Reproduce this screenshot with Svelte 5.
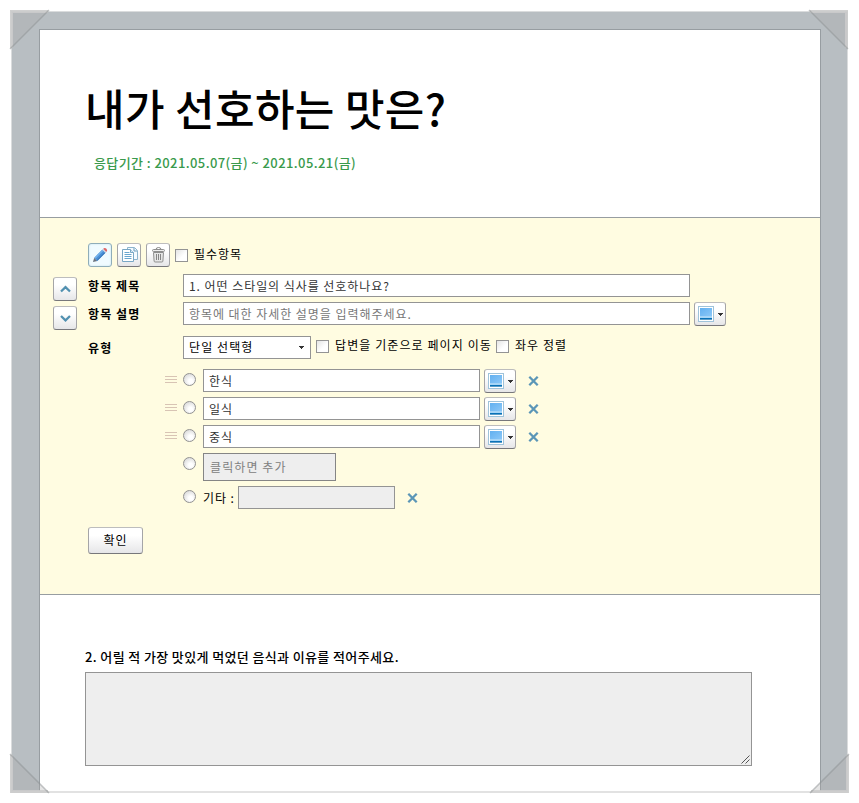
<script>
	let required = $state(false);
	let jumpByAnswer = $state(false);
	let alignSides = $state(false);
	let title = $state('1. 어떤 스타일의 식사를 선호하나요?');
	let description = $state('');
	let type = $state('single');
	let options = $state([
		{ id: 1, text: '한식' },
		{ id: 2, text: '일식' },
		{ id: 3, text: '중식' }
	]);

	const corners = ['top-left', 'top-right', 'bottom-left', 'bottom-right'];

	function addOption() {
		const id = Math.max(0, ...options.map((o) => o.id)) + 1;
		options.push({ id, text: '' });
	}

	function removeOption(id) {
		options = options.filter((o) => o.id !== id);
	}
</script>

{#snippet imageButton()}
	<button class="btn image-btn" aria-label="이미지">
		<svg width="30" height="22" viewBox="0 0 30 22">
			<defs>
				<linearGradient id="sky" x1="0" y1="0" x2="1" y2="1">
					<stop offset="0" stop-color="#62b0f0" />
					<stop offset="1" stop-color="#8cc8f8" />
				</linearGradient>
			</defs>
			<rect x="3.5" y="3.5" width="15" height="15" fill="#fff" stroke="#9fc3da" />
			<rect x="5" y="5" width="12" height="9" fill="url(#sky)" />
			<rect x="5" y="13" width="12" height="2" fill="#a6d5f7" />
			<rect x="5" y="15" width="12" height="1" fill="#0872b8" />
			<rect x="5" y="16" width="12" height="1" fill="#5d9dc8" />
			<path d="M23 10h5v1h-1v1h-1v1h-1v-1h-1v-1h-1z" fill="#333" />
		</svg>
	</button>
{/snippet}

{#snippet removeIcon()}
	<svg width="11" height="10" viewBox="0 0 11 10">
		<path d="M1.3 .8 9.7 9.2M9.7 .8 1.3 9.2" stroke="#5b96b7" stroke-width="2.300" fill="none" />
	</svg>
{/snippet}

<div class="page">
	<div class="frame">
		<div class="paper">
			<header>
				<h1>내가 선호하는 맛은?</h1>
				<p class="period">응답기간 : 2021.05.07(금) ~ 2021.05.21(금)</p>
			</header>

			<section class="editor">
				<div class="order">
					<button class="btn square" aria-label="위로">
						<svg width="22" height="22" viewBox="0 0 22 22">
							<path d="M7 13.5 11.5 9.2 16 13.5" stroke="#5190b0" stroke-width="2.3" fill="none" />
						</svg>
					</button>
					<button class="btn square" aria-label="아래로">
						<svg width="22" height="22" viewBox="0 0 22 22">
							<path d="M7 9 11.5 13.3 16 9" stroke="#5190b0" stroke-width="2.3" fill="none" />
						</svg>
					</button>
				</div>

				<div class="form">
					<div class="row tools">
						<button class="btn square active" aria-label="편집">
							<svg width="22" height="22" viewBox="0 0 22 22">
								<path d="M4 18 5.2 13.7 8.4 16.9z" fill="#6b7480" />
								<path d="M5.2 13.7 13.4 5.5 16.6 8.7 8.4 16.9z" fill="#4a90d6" />
								<path d="M6.3 14 14 6.3" stroke="#75b4ee" stroke-width="1.2" />
								<path d="M8 16.5 16.2 8.3" stroke="#2f6cb0" />
								<path d="M13.2 5.7 14.2 4.7 17.4 7.9 16.4 8.9z" fill="#c9d3df" />
								<path d="M14.2 4.7Q15.8 3.2 17.4 4.7T17.4 7.9z" fill="#e06363" />
							</svg>
						</button>
						<button class="btn square" aria-label="복사">
							<svg width="22" height="22" viewBox="0 0 22 22">
								<path d="M9.5 3.5h7l3 3v9h-10z" fill="#f4faff" stroke="#8db4cd" />
								<path d="M16 4v3h3" fill="none" stroke="#6c9dbd" />
								<path d="M4.5 5.5h8l3 3v9h-11z" fill="#fff" stroke="#79a7c5" />
								<path d="M12.5 5.5v3h3" fill="#d6eaf7" stroke="#79a7c5" />
								<path d="M6.5 8.5h5M6.5 10.5h7M6.5 12.5h7M6.5 14.5h7" stroke="#69a6cf" />
							</svg>
						</button>
						<button class="btn square" aria-label="삭제">
							<svg width="22" height="22" viewBox="0 0 22 22">
								<path d="M9 5.5Q9 3.5 11.5 3.5T14 5.5" fill="none" stroke="#888" />
								<rect x="5.5" y="5.5" width="12" height="2" rx="1" fill="#eee" stroke="#8f8f8f" />
								<path d="M6.5 8.5h10l-.6 8.5q0 1-1 1h-6.8q-1 0-1-1z" fill="#e6e6e6" stroke="#8f8f8f" />
								<path d="M9.5 10v6M11.5 10v6M13.5 10v6" stroke="#858585" />
							</svg>
						</button>
						<label class="check">
							<input type="checkbox" bind:checked={required} />
							<span>필수항목</span>
						</label>
					</div>

					<div class="row title-row">
						<label class="name" for="title">항목 제목</label>
						<input id="title" class="text wide" type="text" bind:value={title} />
					</div>

					<div class="row desc-row">
						<label class="name" for="desc">항목 설명</label>
						<input
							id="desc"
							class="text wide"
							type="text"
							placeholder="항목에 대한 자세한 설명을 입력해주세요."
							bind:value={description}
						/>
						{@render imageButton()}
					</div>

					<div class="row type-row">
						<label class="name" for="type">유형</label>
						<div class="select">
							<select id="type" bind:value={type}>
								<option value="single">단일 선택형</option>
								<option value="multi">복수 선택형</option>
								<option value="text">텍스트형</option>
							</select>
							<svg width="5" height="3" viewBox="0 0 5 3">
								<path d="M0 0h5v1h-1v1h-1v1h-1v-1h-1v-1h-1z" fill="#333" />
							</svg>
						</div>
						<label class="check">
							<input type="checkbox" bind:checked={jumpByAnswer} />
							<span>답변을 기준으로 페이지 이동</span>
						</label>
						<label class="check">
							<input type="checkbox" bind:checked={alignSides} />
							<span>좌우 정렬</span>
						</label>
					</div>

					<ul class="options">
						{#each options as option (option.id)}
							<li>
								<span class="grip"><i></i><i></i><i></i></span>
								<span class="radio"></span>
								<input class="text" type="text" bind:value={option.text} />
								{@render imageButton()}
								<button class="remove" aria-label="삭제" onclick={() => removeOption(option.id)}>
									{@render removeIcon()}
								</button>
							</li>
						{/each}
						<li class="add">
							<span class="grip"></span>
							<span class="radio"></span>
							<button class="add-box" onclick={addOption}>클릭하면 추가</button>
						</li>
						<li class="etc">
							<span class="grip"></span>
							<span class="radio"></span>
							<span class="etc-label">기타 :</span>
							<input class="text" type="text" disabled />
							<button class="remove" aria-label="삭제">
								{@render removeIcon()}
							</button>
						</li>
					</ul>

					<button class="btn confirm">확인</button>
				</div>
			</section>

			<section class="question">
				<h2>2. 어릴 적 가장 맛있게 먹었던 음식과 이유를 적어주세요.</h2>
				<div class="answer">
					<svg width="9" height="9" viewBox="0 0 9 9">
						<path d="M.5 8.5 8.5 .5M4.5 8.5 8.5 4.5" stroke="#555" fill="none" />
					</svg>
				</div>
			</section>
		</div>
	</div>

	{#each corners as corner}
		<svg class="corner {corner}" width="42" height="42" viewBox="0 0 42 42">
			<path d="M1 1H40L1 40z" fill="#aaa" fill-opacity=".3" />
			<path d="M2.500 39V2.500H39" stroke="#ccc" stroke-width="3" stroke-opacity=".85" fill="none" />
			<path d="M1 40 40 1" stroke="#8c8f91" stroke-opacity=".5" stroke-width="1.500" />
		</svg>
	{/each}
</div>

<style>
	:global(body) {
		margin: 0;
		background: #fff;
	}

	.page {
		position: relative;
		width: 859px;
		height: 803px;
		overflow: hidden;
		box-sizing: border-box;
		padding: 11px 11px 0 11px;
		background: #fff;
		font-family: 'Noto Sans CJK KR', sans-serif;
		font-size: 12px;
		letter-spacing: 0.95px;
		color: #000;
	}

	.page * {
		box-sizing: border-box;
	}

	.frame {
		width: 837px;
		height: 782px;
		padding: 17px 26px 0 27px;
		border: 1px solid #dadcdd;
		border-bottom: 2px solid #e2e2e2;
		background: #b8bec2;
	}

	.paper {
		width: 782px;
		height: 762px;
		border: 1px solid #979da1;
		border-bottom: none;
		background: #fff;
	}

	header {
		height: 187px;
		padding: 45px 0 0 45px;
	}

	h1 {
		margin: 0;
		font-size: 43px;
		font-weight: 500;
		line-height: 64px;
		letter-spacing: 0.4px;
		white-space: nowrap;
	}

	.period {
		margin: 14px 0 0 9px;
		font-size: 13px;
		font-weight: 500;
		line-height: 20px;
		letter-spacing: 0.41px;
		color: #399a4c;
		white-space: nowrap;
	}

	.editor {
		display: flex;
		height: 378px;
		padding: 25px 0 0 13px;
		border-top: 1px solid #979da1;
		border-bottom: 1px solid #979da1;
		background: #fffce1;
	}

	.order {
		display: flex;
		flex-direction: column;
		gap: 5px;
		width: 24px;
		margin-right: 11px;
		padding-top: 34px;
	}

	.form {
		flex: 1;
	}

	.btn {
		display: block;
		flex: none;
		margin: 0;
		padding: 0;
		border: 1px solid #a5a5a7;
		border-top-color: #bdbdbd;
		border-bottom-color: #77777b;
		border-radius: 3px;
		background: linear-gradient(#fff 30%, #e6e6e8);
		color: #000;
		font: inherit;
		letter-spacing: inherit;
		cursor: pointer;
	}

	.btn svg,
	.remove svg {
		display: block;
	}

	.square {
		width: 24px;
		height: 24px;
	}

	.active {
		border-color: #8fadb9;
		background: #f0fbff;
		box-shadow: inset 0 0 2px #bddce8;
	}

	.image-btn {
		width: 32px;
		height: 24px;
		margin-left: 4px;
	}

	.row {
		display: flex;
	}

	.tools {
		gap: 5px;
		height: 24px;
	}

	.title-row {
		height: 23px;
		margin-top: 7px;
	}

	.desc-row {
		height: 24px;
		margin-top: 5px;
	}

	.type-row {
		height: 23px;
		margin-top: 10px;
	}

	.name {
		width: 95px;
		font-weight: 700;
		line-height: 23px;
		letter-spacing: 1.1px;
		white-space: nowrap;
	}

	.check {
		display: flex;
		align-items: center;
		height: 22px;
		line-height: 22px;
		white-space: nowrap;
	}

	.check input {
		width: 13px;
		height: 13px;
		margin: 2px 6px 0 0;
		border: 1px solid #949494;
		background: linear-gradient(135deg, #e4e4e4, #fff 60%);
		appearance: none;
	}

	.check span {
		line-height: 20px;
	}

	.type-row .check {
		margin: -2px 0 0 5px;
		letter-spacing: 1.09px;
	}

	.type-row .check input {
		margin-top: 3px;
	}

	.type-row .check + .check {
		margin-left: 4px;
	}

	.text {
		flex: none;
		width: 277px;
		height: 23px;
		margin: 0;
		padding: 0 5px;
		border: 1px solid #949494;
		border-radius: 0;
		outline: none;
		background: #fff;
		color: #333;
		font: inherit;
		letter-spacing: inherit;
	}

	.text::placeholder {
		color: #777;
		opacity: 1;
	}

	.text:disabled {
		background: #eee;
	}

	.wide {
		width: 507px;
	}

	.select {
		position: relative;
		width: 128px;
		height: 23px;
	}

	select {
		display: block;
		width: 100%;
		height: 100%;
		padding: 0 6px 2px 5px;
		border: 1px solid #949494;
		border-radius: 0;
		background: #fff;
		color: #000;
		font: inherit;
		letter-spacing: 1.1px;
		appearance: none;
	}

	.select svg {
		position: absolute;
		top: 10px;
		right: 7px;
	}

	.options {
		margin: 10px 0 0 77px;
		padding: 0;
		list-style: none;
	}

	.options li {
		display: flex;
		height: 24px;
		margin-bottom: 4px;
	}

	.grip {
		display: flex;
		flex-direction: column;
		gap: 2px;
		width: 12px;
		margin-right: 6px;
		padding-top: 7px;
	}

	.grip i {
		height: 1px;
		background: #d8c4b4;
	}

	.radio {
		width: 13px;
		height: 13px;
		margin: 4px 7px 0 0;
		border: 1px solid #929292;
		border-radius: 50%;
		background: radial-gradient(circle at 60% 65%, #fff 20%, #cfcfcf);
	}

	.remove {
		align-self: flex-start;
		margin: 7px 0 0 12px;
		padding: 0;
		border: none;
		background: none;
		cursor: pointer;
	}

	.options li.add {
		height: 28px;
		margin-bottom: 5px;
	}

	.add-box {
		width: 133px;
		height: 28px;
		padding: 0 6px 1px;
		border: 1px solid #858585;
		background: #eee;
		color: #808080;
		font: inherit;
		letter-spacing: 1.1px;
		text-align: left;
	}

	.options li.etc {
		height: 23px;
		margin-bottom: 18px;
	}

	.etc-label {
		width: 35px;
		line-height: 24px;
		white-space: nowrap;
	}

	.etc .text {
		width: 157px;
	}

	.confirm {
		width: 55px;
		height: 27px;
		padding-bottom: 2px;
	}

	.question {
		padding: 52px 0 0 45px;
	}

	h2 {
		margin: 0 0 5px;
		font-size: 13px;
		font-weight: 500;
		line-height: 20px;
		letter-spacing: 0.37px;
		white-space: nowrap;
	}

	.answer {
		display: flex;
		align-items: flex-end;
		justify-content: flex-end;
		width: 667px;
		height: 94px;
		padding: 1px;
		border: 1px solid #949494;
		background: #eee;
	}

	.corner {
		position: absolute;
	}

	.top-left {
		top: 9px;
		left: 9px;
	}

	.top-right {
		top: 9px;
		left: 807px;
		transform: scaleX(-1);
	}

	.bottom-left {
		top: 752px;
		left: 9px;
		transform: scaleY(-1);
	}

	.bottom-right {
		top: 752px;
		left: 808px;
		transform: scale(-1);
	}
</style>
